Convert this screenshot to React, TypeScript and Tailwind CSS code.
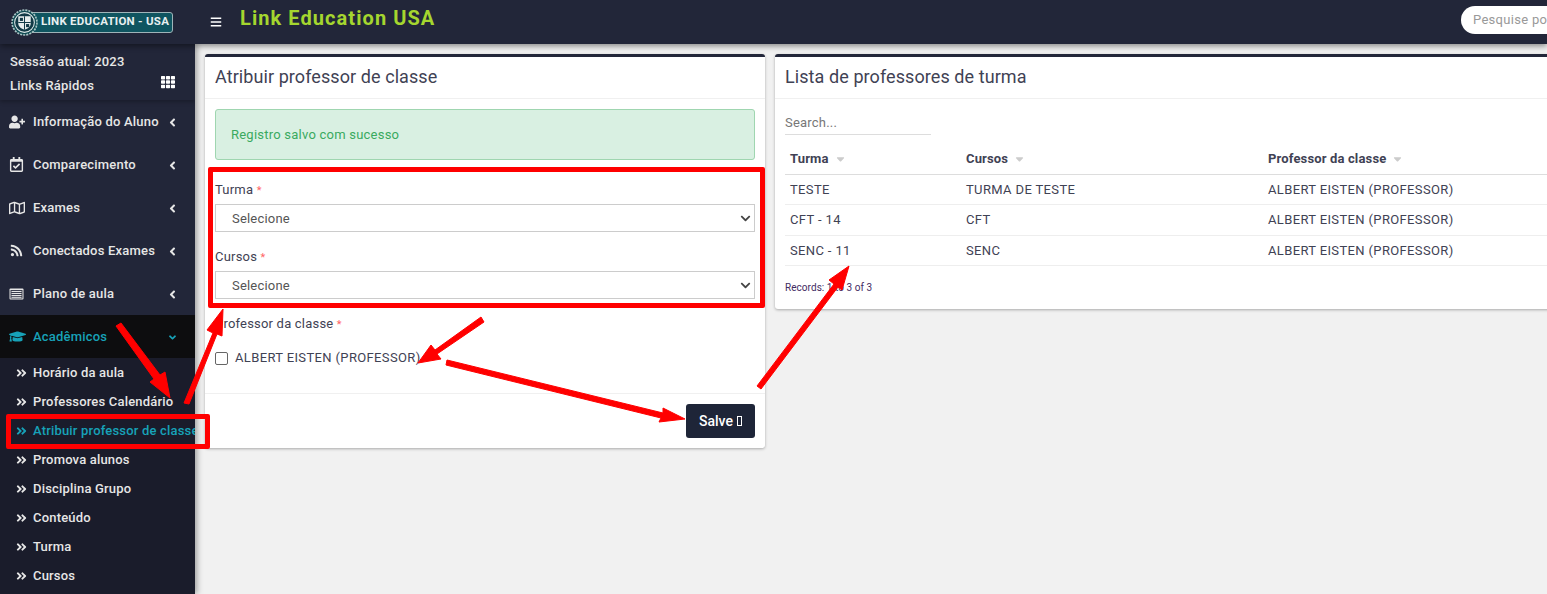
import React from "react";
import {
  FaBars, FaTh, FaUserPlus, FaRegCalendarCheck, FaRegMap, FaRss, FaGraduationCap,
  FaAngleLeft, FaAngleDown, FaAngleDoubleRight, FaChevronDown, FaSortDown,
} from "react-icons/fa";

function PlanIcon({ className }: { className?: string }) {
  return (
    <svg viewBox="0 0 15 12" className={className} fill="none">
      <rect x="0.5" y="0.5" width="14" height="11" rx="1" fill="#e6e6e6" />
      <rect x="1.5" y="2" width="12" height="8.5" fill="#3a3d4d" />
      <path d="M2.5 3.5h10M2.5 5.5h10M2.5 7.5h10M2.5 9.3h10" stroke="#e6e6e6" strokeWidth="1" />
    </svg>
  );
}

const menu = [
  { label: "Informação do Aluno", Icon: FaUserPlus, cls: "text-[16px]" },
  { label: "Comparecimento", Icon: FaRegCalendarCheck, cls: "text-[15px]" },
  { label: "Exames", Icon: FaRegMap, cls: "text-[16px]" },
  { label: "Conectados Exames", Icon: FaRss, cls: "text-[13px] ml-[1px]" },
  { label: "Plano de aula", Icon: PlanIcon, cls: "w-[15px] h-[12px]" },
];
const sub = ["Horário da aula", "Professores Calendário", "Atribuir professor de classe", "Promova alunos", "Disciplina Grupo", "Conteúdo", "Turma", "Cursos"];
const rows = [
  ["TESTE", "TURMA DE TESTE"],
  ["CFT - 14", "CFT"],
  ["SENC - 11", "SENC"],
];

function Logo() {
  return (
    <div className="relative ml-[11px] flex h-[26px] w-[162px] items-center">
      <div className="ml-[10px] flex h-[21px] w-[152px] items-center rounded-[3px] border border-[#9fb4b8] bg-[#0f5560] pl-[19px]">
        <span className="whitespace-nowrap text-[11.5px] font-bold tracking-[0.25px] text-[#e8f0f0]">LINK EDUCATION - USA</span>
      </div>
      <svg viewBox="0 0 26 26" className="absolute left-0 top-0 h-[27px] w-[27px]">
        <circle cx="13" cy="13" r="12" fill="#0f4a52" stroke="#a9c4c4" strokeWidth="1.6" strokeDasharray="2 1" />
        <circle cx="13" cy="13" r="9.5" fill="#123a46" stroke="#dfe9e9" strokeWidth="1" />
        <path d="M7 7h12v7c0 3-3 5-6 6-3-1-6-3-6-6z" fill="#e8eeee" />
        <path d="M13 7v13M7 13h12" stroke="#123a46" strokeWidth="1" />
        <rect x="8.5" y="8.5" width="3" height="3" fill="#123a46" />
        <rect x="14.5" y="14.5" width="3" height="3" fill="#123a46" />
      </svg>
    </div>
  );
}

function Field({ label }: { label: string }) {
  return (
    <div>
      <label className="block h-[18px] text-[13px] leading-[20px] tracking-[0.2px] text-[#3f4254]">
        {label} <span className="text-[11px] text-[#f66]">*</span>
      </label>
      <div className="relative mt-[6px]">
        <select className="h-[28px] w-full appearance-none rounded-none border border-[#ccc] bg-white pl-[16px] pt-[2px] text-[13px] tracking-[0.2px] text-[#555]">
          <option>Selecione</option>
        </select>
        <FaChevronDown className="pointer-events-none absolute right-[4px] top-[9px] text-[11px] text-[#444]" />
      </div>
    </div>
  );
}

function Overlay() {
  const arrows = [
    "M116 326 L154 379 L150 382 L170 398 L165 372 L160 375 L121 323 Z",
    "M184 403 L213 333 L207 330 L223 309 L222 336 L217 334 L189 404 Z",
    "M481 317 L435 350 L431 345 L418 363 L441 359 L437 354 L484 322 Z",
    "M447 360 L663 413 L663 408 L685 419 L659 422 L661 418 L446 365 Z",
    "M757 386 L834 284 L829 280 L849 266 L842 290 L838 287 L761 389 Z",
  ];
  return (
    <svg className="pointer-events-none absolute left-0 top-0 z-30 h-[594px] w-[1547px]" viewBox="0 0 1547 594">
      {arrows.map((d) => (
        <path key={d} d={d} fill="#ff0000" stroke="#ff0000" strokeWidth="1" strokeLinejoin="round" />
      ))}
    </svg>
  );
}

export default function App() {
  return (
    <div className="relative h-[594px] w-[1547px] overflow-hidden bg-[#f1f1f1] font-['Roboto',sans-serif]">
      <header className="relative z-20 flex h-[44px] items-center bg-[#222639] shadow-[0_2px_6px_rgba(0,0,0,0.45)]">
        <div className="w-[195px] shrink-0"><Logo /></div>
        <FaBars className="ml-[15px] text-[12px] text-white" />
        <h1 className="ml-[18px] -mt-[8px] text-[20px] font-bold tracking-[1.07px] text-[#a5d62f]">Link Education USA</h1>
        <div className="ml-auto -mt-[5px] flex h-[28px] w-[90px] -mr-[4px] items-center overflow-hidden rounded-l-[14px] bg-white pl-[12px] text-[13px] tracking-[0.3px] whitespace-nowrap text-[#999]">Pesquise po</div>
      </header>

      <div className="flex h-[550px]">
        <aside className="relative z-10 h-[550px] w-[195px] shrink-0 overflow-hidden bg-[#1a1c2b] shadow-[2px_0_6px_rgba(0,0,0,0.35)]">
          <div className="relative h-[56px] bg-[#222639] pl-[10px] pt-[9px] text-[13px] font-medium tracking-[0.2px] text-[#e6e6e6] shadow-[0_2px_4px_rgba(0,0,0,0.25)]">
            <div className="leading-[18px]">Sessão atual: 2023</div>
            <div className="mt-[6px] flex items-center justify-between pr-[20px] leading-[18px]">
              <span>Links Rápidos</span>
              <FaTh className="-mt-[8px] text-[14px] text-white" />
            </div>
          </div>
          <nav className="bg-[#222639]">
            {menu.map(({ label, Icon, cls }) => (
              <div key={label} className="flex h-[43px] items-center pl-[9px] pr-[16px] text-[13px] font-medium tracking-[0.2px] text-[#e6e6e6]">
                <span className="flex w-[24px] shrink-0 items-center"><Icon className={cls} /></span>
                <span className="whitespace-nowrap">{label}</span>
                <FaAngleLeft className="ml-auto mt-[2px] text-[13px]" />
              </div>
            ))}
            <div className="flex h-[43px] items-center bg-[#0d0d0f] pl-[9px] pr-[16px] text-[13px] font-medium tracking-[0.2px] text-[#17a2b8]">
              <span className="flex w-[24px] shrink-0 items-center"><FaGraduationCap className="text-[17px]" /></span>
              <span>Acadêmicos</span>
              <FaAngleDown className="ml-auto mr-[1px] mt-[2px] text-[11px]" />
            </div>
          </nav>
          <ul className="bg-[#1a1c2b]">
            {sub.map((s, i) => (
              <li key={s} className={"flex h-[29px] items-center whitespace-nowrap pl-[16px] text-[13px] font-medium tracking-[0.18px] " + (i === 2 ? "text-[#17a2b8]" : "text-[#e6e6e6]")}>
                <FaAngleDoubleRight className="mr-[6px] w-[11px] shrink-0 text-[12px]" />
                {s}
              </li>
            ))}
          </ul>
        </aside>

        <main className="flex min-w-0 flex-1 items-start gap-[10px] pl-[10px] pt-[10px]">
          <section className="w-[560px] shrink-0 rounded-[3px] border-t-[3px] border-[#222639] bg-white shadow-[0_1px_3px_rgba(0,0,0,0.3)]">
            <h2 className="flex h-[42px] items-center border-b border-[#f0f0f0] pb-[2px] pl-[10px] text-[18px] tracking-[0.08px] text-[#3f4254]">Atribuir professor de classe</h2>
            <div className="px-[10px] pt-[10px]">
              <div className="flex h-[51px] items-center rounded-[3px] border border-[#9fd6b0] bg-[#d9f0e2] pl-[15px] text-[13px] tracking-[0.23px] text-[#3aaa5f]">Registro salvo com sucesso</div>
              <div className="mt-[20px] space-y-[15px]">
                <Field label="Turma" />
                <Field label="Cursos" />
              </div>
              <label className="mt-[16px] block text-[13px] leading-[18px] tracking-[0.2px] text-[#3f4254]">
                Professor da classe <span className="text-[11px] text-[#f66]">*</span>
              </label>
              <div className="mt-[15px] flex h-[18px] items-center text-[13px] tracking-[0.36px] text-[#3f4254]">
                <input type="checkbox" className="h-[13px] w-[13px] appearance-none rounded-[2px] border border-[#666] bg-white" />
                <span className="ml-[7px]">ALBERT EISTEN (PROFESSOR)</span>
              </div>
            </div>
            <div className="mt-[26px] flex h-[55px] items-start justify-end border-t border-[#f0f0f0] pr-[10px] pt-[10px]">
              <button className="flex h-[34px] w-[69px] items-center justify-center gap-[4px] rounded-[3px] bg-[#1e2538] text-[14px] font-medium text-white">
                Salve <span className="inline-block h-[10px] w-[5px] border border-white" />
              </button>
            </div>
          </section>

          <section className="w-[800px] shrink-0 rounded-[3px] border-t-[3px] border-[#222639] bg-white shadow-[0_1px_3px_rgba(0,0,0,0.3)]">
            <h2 className="flex h-[42px] items-center border-b border-[#f0f0f0] pb-[2px] pl-[10px] text-[18px] tracking-[0.08px] text-[#3f4254]">Lista de professores de turma</h2>
            <div className="px-[10px] pt-[10px]">
              <div className="flex h-[26px] w-[146px] items-center border-b border-[#ddd] pt-[2px] text-[13px] tracking-[0.2px] text-[#777]">Search...</div>
              <table className="mt-[1px] w-[790px] table-fixed border-collapse text-left text-[13px] text-[#3f4254]">
                <thead>
                  <tr className="h-[38px] border-b border-[#ddd]">
                    {[["Turma", "w-[176px]"], ["Cursos", "w-[302px]"], ["Professor da classe", ""]].map(([h, w]) => (
                      <th key={h} className={"pl-[5px] pt-[8px] font-bold tracking-[0.15px] " + w}>
                        <span className="inline-flex items-center gap-[5px]">{h}<FaSortDown className="-mt-[4px] text-[13px] text-[#ccc]" /></span>
                      </th>
                    ))}
                  </tr>
                </thead>
                <tbody>
                  {rows.map((r, i) => (
                    <tr key={r[0]} className={"border-b border-[#eee] tracking-[0.36px] " + (i === 1 ? "h-[31px]" : "h-[30px]")}>
                      <td className={"pl-[5px] " + (i === 1 ? "" : "pt-[1px]")}>{r[0]}</td>
                      <td className={"pl-[5px] " + (i === 1 ? "" : "pt-[1px]")}>{r[1]}</td>
                      <td className={"pl-[5px] " + (i === 1 ? "" : "pt-[1px]")}>ALBERT EISTEN (PROFESSOR)</td>
                    </tr>
                  ))}
                </tbody>
              </table>
              <div className="mt-[15px] pb-[14px] text-[10px] leading-[14px] tracking-[0.05px] text-[#3f2b63]">Records: 1 to 3 of 3</div>
            </div>
          </section>
        </main>
      </div>

      <div className="pointer-events-none absolute left-[208px] top-[167px] z-30 h-[141px] w-[557px] rounded-[2px] border-[5px] border-[#ff0000]" />
      <div className="pointer-events-none absolute left-[6px] top-[414px] z-30 h-[35px] w-[204px] rounded-[2px] border-[5px] border-[#ff0000]" />
      <Overlay />
    </div>
  );
}
